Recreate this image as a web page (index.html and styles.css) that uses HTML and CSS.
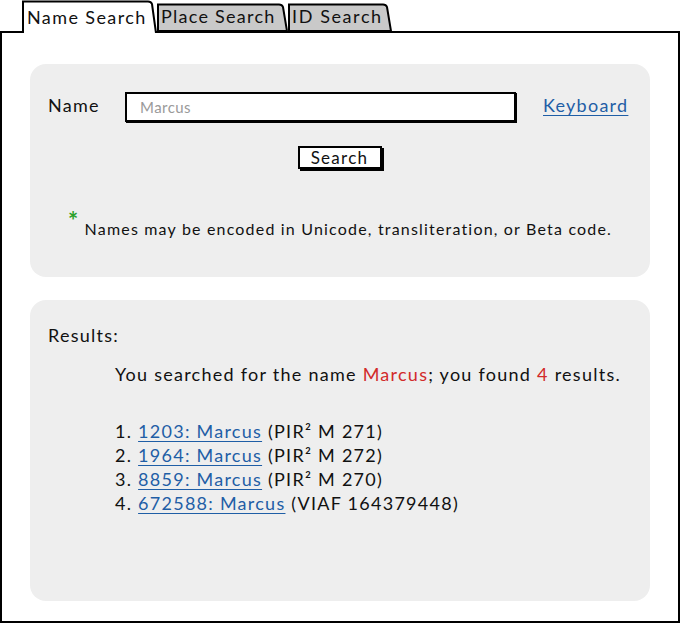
FILE: index.html
```html
<!DOCTYPE html>
<html>
<head>
<meta charset="utf-8">
<link rel="stylesheet" href="styles.css">
</head>
<body>
<div class="tabs">
  <div class="tab tab-active">
    <svg class="tab-shape" width="135" height="33" viewBox="0 0 135 33"><path d="M1,33 L1,1.5 L126,1.5 Q129,1.5 130,4 L134,33" fill="#fff" stroke="#000" stroke-width="2"/></svg>
    <span class="tab-label">Name Search</span>
  </div>
  <div class="tab tab-place">
    <svg class="tab-shape" width="131" height="28" viewBox="0 0 131 28"><path d="M1,28 L1,1.5 L122,1.5 Q125,1.5 126,4 L130,28 Z" fill="#c9c9c9" stroke="#000" stroke-width="2"/></svg>
    <span class="tab-label">Place Search</span>
  </div>
  <div class="tab tab-id">
    <svg class="tab-shape" width="104" height="28" viewBox="0 0 104 28"><path d="M1,28 L1,1.5 L95,1.5 Q98,1.5 99,4 L103,28 Z" fill="#c9c9c9" stroke="#000" stroke-width="2"/></svg>
    <span class="tab-label">ID Search</span>
  </div>
</div>
<div class="frame">
  <div class="panel search-panel">
    <div class="name-row">
      <span class="name-label">Name</span>
      <div class="input"><span class="placeholder">Marcus</span></div>
      <a class="link keyboard" href="#">Keyboard</a>
    </div>
    <div class="button-row">
      <div class="button">Search</div>
    </div>
    <p class="note"><span class="star">*</span> Names may be encoded in Unicode, transliteration, or Beta code.</p>
  </div>
  <div class="panel results-panel">
    <div class="results-title">Results:</div>
    <p class="summary">You searched for the name <span class="red">Marcus</span>; you found <span class="red">4</span> results.</p>
    <ol class="results">
      <li>1. <a class="link" href="#">1203: Marcus</a> (PIR² M 271)</li>
      <li>2. <a class="link" href="#">1964: Marcus</a> (PIR² M 272)</li>
      <li>3. <a class="link" href="#">8859: Marcus</a> (PIR² M 270)</li>
      <li>4. <a class="link" href="#">672588: Marcus</a> (VIAF 164379448)</li>
    </ol>
  </div>
</div>
</body>
</html>
```

FILE: styles.css
```css
* { box-sizing: border-box; }
html, body {
  margin: 0;
  padding: 0;
  background: #fff;
}
body {
  width: 681px;
  height: 625px;
  overflow: hidden;
  font-family: "Lato", "Open Sans", sans-serif;
  color: #111;
  font-size: 18px;
  letter-spacing: 0.07em;
}
.tabs {
  display: flex;
  align-items: flex-end;
  height: 31px;
  padding-left: 22px;
  position: relative;
  z-index: 2;
}
.tab {
  position: relative;
  display: flex;
  align-items: center;
  white-space: nowrap;
}
.tab-shape {
  position: absolute;
  left: 0;
  top: 0;
}
.tab-label {
  position: relative;
  font-size: 18px;
  line-height: 1;
}
.tab-active {
  width: 135px;
  height: 33px;
  margin-bottom: -2px;
  padding: 0 0 0 5px;
}
.tab-active .tab-label { letter-spacing: 1.4px; }
.tab-place {
  width: 131px;
  height: 28px;
  padding: 0 0 2px 4px;
}
.tab-id {
  width: 104px;
  height: 28px;
  padding: 0 0 2px 4px;
}
.tab-id .tab-label { letter-spacing: 1.6px; }
.frame {
  width: 680px;
  height: 592px;
  border: 2px solid #000;
  padding: 31px 28px 0 28px;
}
.panel {
  background: #eeeeee;
  border-radius: 16px;
}
.search-panel {
  height: 213px;
  padding: 28px 18px 0 18px;
}
.name-row {
  display: flex;
  align-items: center;
  height: 30px;
}
.name-label {
  width: 77px;
  font-size: 18px;
  position: relative;
  top: -2px;
}
.input {
  width: 391px;
  height: 30px;
  background: #fff;
  border: 2px solid #000;
  box-shadow: 1px 1px 0 #000;
  display: flex;
  align-items: center;
  padding-left: 13px;
}
.placeholder {
  color: #9a9a9a;
  font-size: 15px;
  letter-spacing: 0.03em;
}
.link {
  color: #1f5ea6;
  text-decoration: underline;
  text-decoration-thickness: 1px;
  text-underline-offset: 3px;
}
.keyboard {
  margin-left: 27px;
  font-size: 18px;
  position: relative;
  top: -2px;
}
.button-row {
  display: flex;
  justify-content: center;
  margin-top: 24px;
}
.button {
  width: 84px;
  height: 23px;
  margin-right: 1px;
  background: #fff;
  border: 2px solid #000;
  box-shadow: 2px 2px 0 #000;
  font-size: 17px;
  line-height: 19px;
  text-align: center;
}
.note {
  margin: 50px -20px 0 -20px;
  text-align: center;
  white-space: nowrap;
  font-size: 16px;
  line-height: 20px;
  letter-spacing: 0.074em;
}
.star {
  color: #2aa02a;
  font-weight: bold;
  font-size: 24px;
  line-height: 0;
  position: relative;
  top: -5px;
}
.results-panel {
  height: 301px;
  margin-top: 23px;
  padding: 24px 18px 0 18px;
}
.results-title {
  font-size: 18px;
  line-height: 22px;
}
.summary {
  margin: 17px 0 0 67px;
  font-size: 18px;
  line-height: 22px;
}
.red { color: #d22a2a; }
.results {
  list-style: none;
  margin: 34px 0 0 67px;
  padding: 0;
  font-size: 18px;
  line-height: 24px;
}
```
